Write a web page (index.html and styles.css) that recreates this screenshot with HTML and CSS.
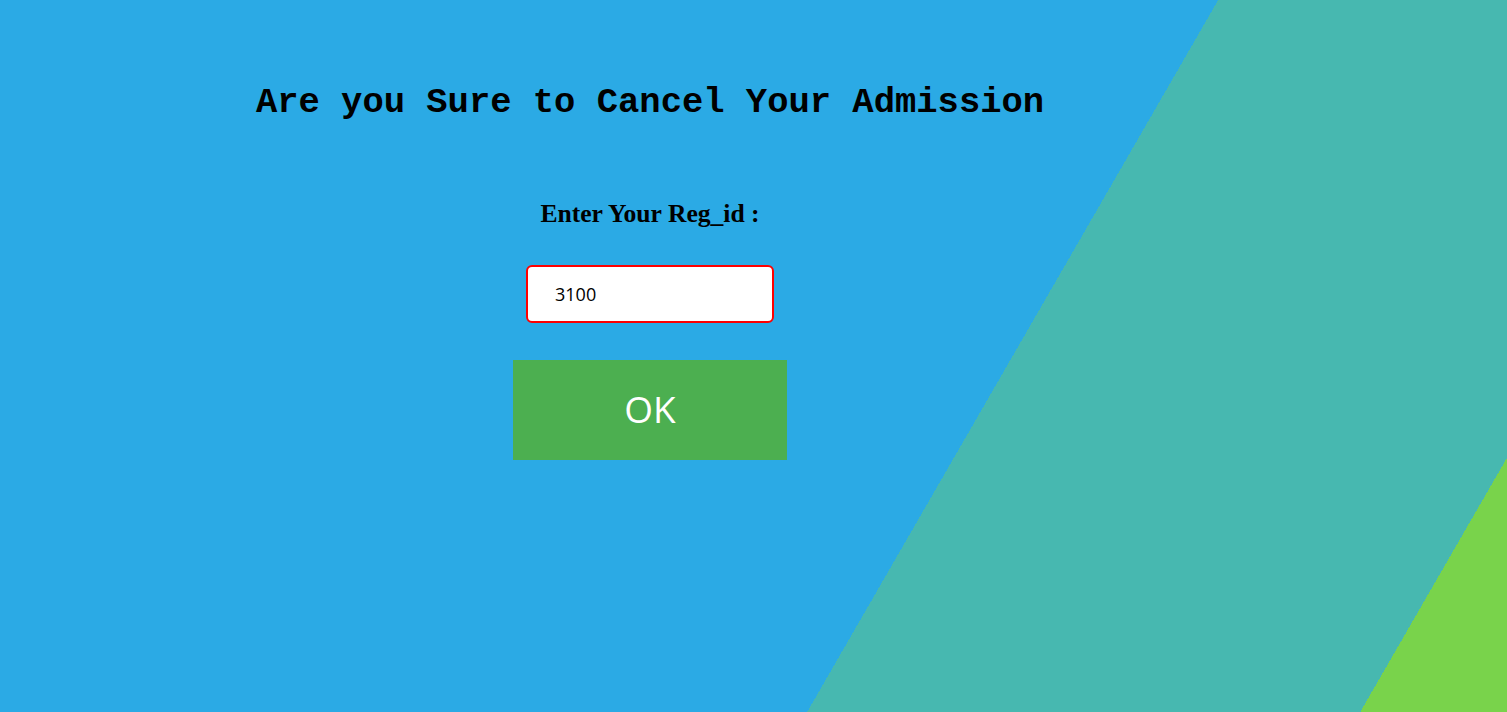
FILE: index.html
```html
<!DOCTYPE html>
<html>
<head>
<meta charset="utf-8">
<link rel="stylesheet" href="styles.css">
</head>
<body>
<div class="page">
  <div class="container">
    <h1 class="title">Are you Sure to Cancel Your Admission</h1>
    <form class="form">
      <label class="label" for="regid">Enter Your Reg_id :</label>
      <input class="field" id="regid" type="text" value="3100">
      <button class="ok" type="button">OK</button>
    </form>
  </div>
</div>
</body>
</html>
```
FILE: styles.css
```css
html, body {
  margin: 0;
  padding: 0;
}
.page {
  width: 100%;
  height: 712px;
  overflow: hidden;
  background: linear-gradient(120deg, #2baae5 0px, #2baae5 1055px, #47b8b0 1055px, #47b8b0 1534px, #79d34b 1534px);
}
.container {
  width: 1300px;
  display: flex;
  flex-direction: column;
  align-items: center;
}
.title {
  margin: 0;
  padding-top: 83px;
  font-family: "Liberation Mono", "Courier New", monospace;
  font-weight: bold;
  font-size: 35.5px;
  line-height: 40px;
  color: #000;
  text-align: center;
}
.form {
  display: flex;
  flex-direction: column;
  align-items: center;
  margin-top: 76px;
}
.label {
  font-family: "Liberation Serif", "Times New Roman", serif;
  font-weight: bold;
  font-size: 25.6px;
  line-height: 30px;
  color: #000;
}
.field {
  box-sizing: border-box;
  margin-top: 36px;
  width: 248px;
  height: 58px;
  border: 2px solid #ff0000;
  border-radius: 6px;
  padding: 0 0 0 27px;
  background: #fff;
  font-family: "Open Sans", "Noto Sans", sans-serif;
  font-size: 18px;
  color: #000;
  outline: none;
}
.ok {
  margin-top: 37px;
  width: 274px;
  height: 100px;
  border: none;
  padding: 0 0 4px 0;
  background: #4caf50;
  color: #fff;
  font-family: "Open Sans", "Noto Sans", sans-serif;
  font-size: 37px;
  cursor: pointer;
}
```
